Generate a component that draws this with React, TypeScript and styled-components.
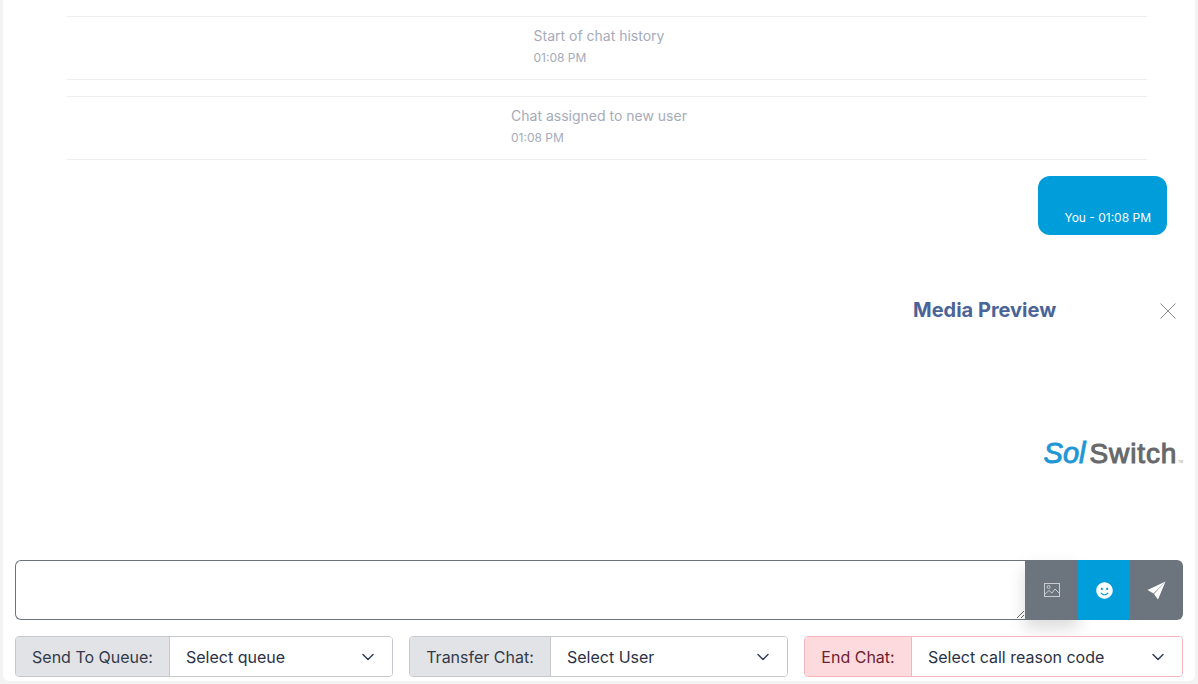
import styled, { createGlobalStyle } from "styled-components";
import { FaSmile } from "react-icons/fa";

const GlobalStyle = createGlobalStyle`
  * {
    box-sizing: border-box;
  }

  body {
    margin: 0;
    background: #f3f3f4;
    font-family: "Inter", "Liberation Sans", sans-serif;
  }
`;

const systemMessages = [
  { id: 1, text: "Start of chat history", time: "01:08 PM" },
  { id: 2, text: "Chat assigned to new user", time: "01:08 PM" },
];

const transferOptions = [
  { id: "queue", label: "Send To Queue:", placeholder: "Select queue", width: 154 },
  { id: "user", label: "Transfer Chat:", placeholder: "Select User", width: 141 },
  { id: "end", label: "End Chat:", placeholder: "Select call reason code", width: 107, danger: true },
];

function ImageIcon() {
  return (
    <svg width="16" height="14" viewBox="0 0 16 14" fill="none" stroke="#c9ccd0" strokeWidth="1">
      <rect x="0.5" y="0.5" width="15" height="13" />
      <circle cx="4.5" cy="4" r="1.5" />
      <path d="M1 11l4-3.5 3 2.5 3-4 4 4" />
    </svg>
  );
}

function SendIcon() {
  return (
    <svg width="19" height="19" viewBox="0 0 19 19" fill="#fff">
      <path d="M18.5 0.5L0.5 9l6 3.5z" />
      <path d="M18.5 0.5L7 13l4 5.5z" />
    </svg>
  );
}

function CloseIcon() {
  return (
    <svg width="16" height="16" viewBox="0 0 16 16" stroke="#8a8d91" strokeWidth="1" fill="none">
      <path d="M0.5 0.5l15 15M15.5 0.5l-15 15" />
    </svg>
  );
}

function Chevron() {
  return (
    <svg width="16" height="16" viewBox="0 0 16 16" fill="none" stroke="#343f5c" strokeWidth="1.5" strokeLinecap="round" strokeLinejoin="round">
      <path d="M3 5.5l5 5 5-5" />
    </svg>
  );
}

export default function App() {
  return (
    <Page>
      <GlobalStyle />
      <Card>
        <Messages>
          {systemMessages.map((message) => (
            <SystemRow key={message.id}>
              <SystemBody>
                <SystemText>{message.text}</SystemText>
                <SystemTime>{message.time}</SystemTime>
              </SystemBody>
            </SystemRow>
          ))}
          <Bubble>
            <BubbleBody />
            <BubbleTime>You - 01:08 PM</BubbleTime>
          </Bubble>
          <MediaPreview>
            <MediaHeader>
              <MediaTitle>Media Preview</MediaTitle>
              <CloseButton aria-label="Close">
                <CloseIcon />
              </CloseButton>
            </MediaHeader>
            <Logo>
              <LogoSol>Sol</LogoSol>
              <LogoSwitch>Switch</LogoSwitch>
              <LogoMark>TM</LogoMark>
            </Logo>
          </MediaPreview>
        </Messages>

        <Composer>
          <MessageInput />
          <ActionButton $first>
            <ImageIcon />
          </ActionButton>
          <ActionButton $accent>
            <FaSmile size={17} />
          </ActionButton>
          <ActionButton $last>
            <SendIcon />
          </ActionButton>
        </Composer>

        <Controls>
          {transferOptions.map((option) => (
            <SelectGroup key={option.id} $danger={option.danger}>
              <GroupLabel $danger={option.danger} $width={option.width}>
                {option.label}
              </GroupLabel>
              <SelectBox>
                {option.placeholder}
                <Chevron />
              </SelectBox>
            </SelectGroup>
          ))}
        </Controls>
      </Card>
    </Page>
  );
}

const Page = styled.div`
  height: 684px;
  padding: 0 3px 3px;
  overflow: hidden;
`;

const Card = styled.div`
  height: 681px;
  display: flex;
  flex-direction: column;
  padding: 0 12px 4px;
  background: #fff;
  border-radius: 0 0 6px 6px;
`;

const Messages = styled.div`
  flex: 1;
  display: flex;
  flex-direction: column;
  padding: 16px 0 0;
`;

const SystemRow = styled.div`
  display: flex;
  justify-content: center;
  height: 64px;
  margin: 0 36px 16px 52px;
  padding: 8px 16px 0 0;
  border-top: 1px solid #eceef0;
  border-bottom: 1px solid #eceef0;
`;

const SystemBody = styled.div`
  display: flex;
  flex-direction: column;
  gap: 3px;
`;

const SystemText = styled.div`
  font-size: 14px;
  line-height: 21px;
  color: #a5abba;
`;

const SystemTime = styled.div`
  font-size: 12px;
  line-height: 18px;
  color: #a5abba;
`;

const Bubble = styled.div`
  align-self: flex-end;
  width: 129px;
  height: 59px;
  margin-right: 16px;
  padding: 12px 16px 8px;
  text-align: right;
  color: #fff;
  background: #009ddb;
  border-radius: 12px;
`;

const BubbleBody = styled.div`
  height: 21px;
`;

const BubbleTime = styled.div`
  font-size: 12px;
  line-height: 18px;
`;

const MediaPreview = styled.div`
  align-self: flex-end;
  width: 270px;
  margin-top: 60px;
`;

const MediaHeader = styled.div`
  display: flex;
  align-items: center;
  justify-content: space-between;
  padding-right: 7px;
`;

const MediaTitle = styled.h5`
  margin: 0;
  font-size: 20px;
  font-weight: 700;
  line-height: 30px;
  color: #4a6498;
`;

const CloseButton = styled.button`
  display: flex;
  padding: 0;
  margin-top: 2px;
  background: none;
  border: none;
`;

const Logo = styled.div`
  display: flex;
  align-items: baseline;
  justify-content: flex-end;
  height: 30px;
  margin-top: 113px;
  line-height: 30px;
  white-space: nowrap;
`;

const LogoSol = styled.span`
  margin-right: 4px;
  font-family: "Liberation Sans", sans-serif;
  font-size: 29px;
  font-style: italic;
  color: #2196d6;
  -webkit-text-stroke: 0.9px #2196d6;
`;

const LogoSwitch = styled.span`
  font-family: "Liberation Sans", sans-serif;
  font-size: 28px;
  letter-spacing: 0.9px;
  color: #66686b;
  -webkit-text-stroke: 1px #66686b;
`;

const LogoMark = styled.span`
  margin-left: 1px;
  font-size: 3px;
  color: #8a8c8f;
`;

const Composer = styled.div`
  display: flex;
  height: 60px;
`;

const MessageInput = styled.textarea`
  flex: 1;
  min-width: 0;
  padding: 8px 12px;
  background: #fff;
  border: 1px solid #6c757d;
  border-right: none;
  border-radius: 6px 0 0 6px;
  outline: none;
`;

const ActionButton = styled.button<{ $first?: boolean; $accent?: boolean; $last?: boolean }>`
  display: flex;
  align-items: center;
  justify-content: center;
  width: ${({ $accent }) => ($accent ? "52px" : "53px")};
  padding: 0;
  color: #fff;
  background: ${({ $accent }) => ($accent ? "#009ddb" : "#6c757d")};
  border: none;
  border-radius: ${({ $last }) => ($last ? "0 6px 6px 0" : "0")};
  box-shadow: ${({ $first }) => ($first ? "0 8px 16px rgba(0, 0, 0, 0.15)" : "none")};
`;

const Controls = styled.div`
  display: grid;
  grid-template-columns: 378px 379px 379px;
  gap: 16px;
  margin-top: 16px;
`;

const SelectGroup = styled.div<{ $danger?: boolean }>`
  display: flex;
  height: 41px;
  font-size: 16px;
  border: 1px solid ${({ $danger }) => ($danger ? "#f8b4bd" : "#c5c8cc")};
  border-radius: 4px;
  overflow: hidden;
`;

const GroupLabel = styled.div<{ $danger?: boolean; $width: number }>`
  display: flex;
  align-items: center;
  justify-content: center;
  flex: 0 0 ${({ $width }) => $width}px;
  color: ${({ $danger }) => ($danger ? "#6e2230" : "#343a4a")};
  background: ${({ $danger }) => ($danger ? "#fddade" : "#e1e3e6")};
  border-right: 1px solid ${({ $danger }) => ($danger ? "#f8b4bd" : "#c5c8cc")};
`;

const SelectBox = styled.div`
  flex: 1;
  display: flex;
  align-items: center;
  justify-content: space-between;
  padding: 0 16px;
  color: #2b3245;
  background: #fff;
`;
